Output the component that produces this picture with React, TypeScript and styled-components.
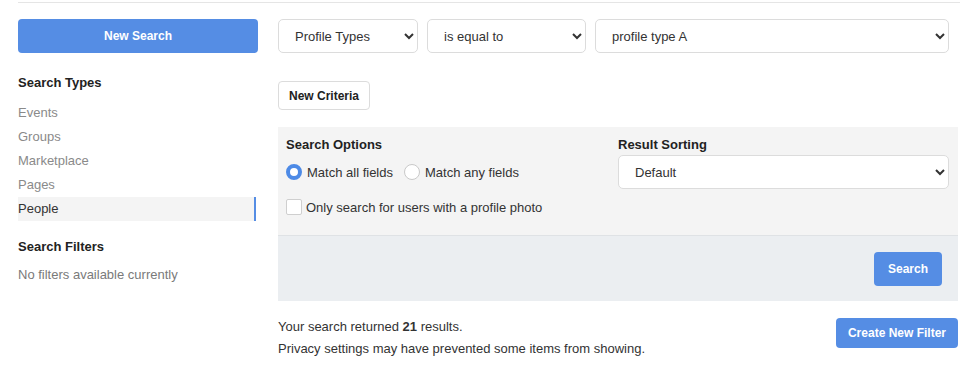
import React from "react";
import styled, { createGlobalStyle } from "styled-components";

const Global = createGlobalStyle`
  html, body { margin: 0; padding: 0; background: #fff; }
  body { font-family: "Liberation Sans", Arial, sans-serif; font-size: 13px; color: #333; }
  * { box-sizing: border-box; }
`;

const Page = styled.div`
  margin: 2px 18px 0;
  border-top: 1px solid #e5e5e5;
  padding-top: 16px;
  display: flex;
  gap: 20px;
`;

const Sidebar = styled.aside`
  width: 240px;
  flex: none;
  display: flex;
  flex-direction: column;
`;

const PrimaryButton = styled.button<{ $block?: boolean; $h?: number; $px?: number }>`
  font-family: inherit;
  font-size: 12px;
  font-weight: bold;
  color: #fff;
  background: #558de4;
  border: none;
  border-radius: 4px;
  height: ${(p) => p.$h ?? 34}px;
  padding: 0 ${(p) => p.$px ?? 14}px;
  width: ${(p) => (p.$block ? "100%" : "auto")};
  cursor: pointer;
`;

const SideHeading = styled.h3<{ $mt: number }>`
  margin: ${(p) => p.$mt}px 0 0;
  font-size: 13px;
  line-height: 16px;
  font-weight: bold;
  color: #222;
`;

const TypeList = styled.ul`
  list-style: none;
  margin: 10px 0 0;
  padding: 0;
`;

const TypeItem = styled.li<{ $active?: boolean }>`
  height: 24px;
  line-height: 24px;
  width: 238px;
  color: ${(p) => (p.$active ? "#333" : "#8a8a8a")};
  background: ${(p) => (p.$active ? "#f4f4f4" : "transparent")};
  border-right: 2px solid ${(p) => (p.$active ? "#558de4" : "transparent")};
`;

const Muted = styled.p`
  margin: 8px 0 0;
  line-height: 24px;
  color: #7a7a7a;
`;

const Main = styled.main`
  width: 680px;
  flex: none;
  display: flex;
  flex-direction: column;
`;

const CriteriaRow = styled.div`
  display: flex;
  gap: 9px;
  width: 671px;
`;

const Select = styled.select<{ $w?: number }>`
  font-family: "Liberation Sans", Arial, sans-serif;
  font-size: 13px;
  color: #333;
  height: 34px;
  width: ${(p) => (p.$w ? `${p.$w}px` : "100%")};
  flex: none;
  padding: 0 4px 0 12px;
  background: #fff;
  border: 1px solid #dcdcdc;
  border-radius: 5px;
`;

const GrowSelect = styled(Select)`
  flex: 1;
`;

const GhostButton = styled.button`
  align-self: flex-start;
  margin-top: 28px;
  height: 29px;
  padding: 0 10px;
  font-family: inherit;
  font-size: 12px;
  font-weight: bold;
  color: #222;
  background: #fff;
  border: 1px solid #dcdcdc;
  border-radius: 4px;
`;

const Panel = styled.section`
  margin-top: 17px;
`;

const PanelBody = styled.div`
  background: #f4f4f4;
  border-bottom: 1px solid #dfe2e5;
  padding: 10px 8px 20px;
  display: grid;
  grid-template-columns: 332px 331px;
  align-items: start;
`;

const Column = styled.div`
  display: flex;
  flex-direction: column;
`;

const Label = styled.div`
  font-weight: bold;
  font-size: 13px;
  line-height: 16px;
  color: #222;
  margin-bottom: 2px;
`;

const RadioRow = styled.div`
  display: flex;
  align-items: center;
  height: 34px;
  gap: 11px;
`;

const Choice = styled.label`
  display: flex;
  align-items: center;
  gap: 5px;
  color: #333;
`;

const Radio = styled.input`
  appearance: none;
  width: 16px;
  height: 16px;
  margin: 0;
  border-radius: 50%;
  background: #fff;
  border: 1px solid #c9c9c9;
  &:checked {
    border: 4.5px solid #4d8ae6;
  }
`;

const CheckRow = styled.label`
  display: flex;
  align-items: center;
  gap: 4px;
  margin-top: 10px;
  height: 16px;
  color: #333;
`;

const Check = styled.input`
  appearance: none;
  width: 16px;
  height: 16px;
  margin: 0;
  background: #fff;
  border: 1px solid #cfcfcf;
  border-radius: 2px;
`;

const PanelFooter = styled.div`
  background: #ebeef1;
  padding: 16px 16px 15px;
  display: flex;
  justify-content: flex-end;
`;

const Results = styled.div`
  margin-top: 15px;
  display: flex;
  justify-content: space-between;
  align-items: flex-start;
`;

const ResultText = styled.div`
  line-height: 22px;
  color: #333;
`;

const Spaced = styled.div`
  margin-top: 2px;
`;

export default function App() {
  const types = ["Events", "Groups", "Marketplace", "Pages", "People"];
  return (
    <>
      <Global />
      <Page>
        <Sidebar>
          <PrimaryButton $block>New Search</PrimaryButton>
          <SideHeading $mt={22}>Search Types</SideHeading>
          <TypeList>
            {types.map((t) => (
              <TypeItem key={t} $active={t === "People"}>
                {t}
              </TypeItem>
            ))}
          </TypeList>
          <SideHeading $mt={18}>Search Filters</SideHeading>
          <Muted>No filters available currently</Muted>
        </Sidebar>
        <Main>
          <CriteriaRow>
            <Select $w={140} defaultValue="pt">
              <option value="pt">Profile Types</option>
            </Select>
            <Select $w={159} defaultValue="eq">
              <option value="eq">is equal to</option>
            </Select>
            <GrowSelect defaultValue="a">
              <option value="a">profile type A</option>
            </GrowSelect>
          </CriteriaRow>
          <GhostButton>New Criteria</GhostButton>
          <Panel>
            <PanelBody>
              <Column>
                <Label>Search Options</Label>
                <RadioRow>
                  <Choice>
                    <Radio type="radio" name="match" defaultChecked />
                    Match all fields
                  </Choice>
                  <Choice>
                    <Radio type="radio" name="match" />
                    Match any fields
                  </Choice>
                </RadioRow>
                <CheckRow>
                  <Check type="checkbox" />
                  Only search for users with a profile photo
                </CheckRow>
              </Column>
              <Column>
                <Label>Result Sorting</Label>
                <Select defaultValue="d">
                  <option value="d">Default</option>
                </Select>
              </Column>
            </PanelBody>
            <PanelFooter>
              <PrimaryButton>Search</PrimaryButton>
            </PanelFooter>
          </Panel>
          <Results>
            <ResultText>
              Your search returned <b>21</b> results.
              <br />
              Privacy settings may have prevented some items from showing.
            </ResultText>
            <Spaced>
              <PrimaryButton $h={30} $px={12}>
                Create New Filter
              </PrimaryButton>
            </Spaced>
          </Results>
        </Main>
      </Page>
    </>
  );
}
